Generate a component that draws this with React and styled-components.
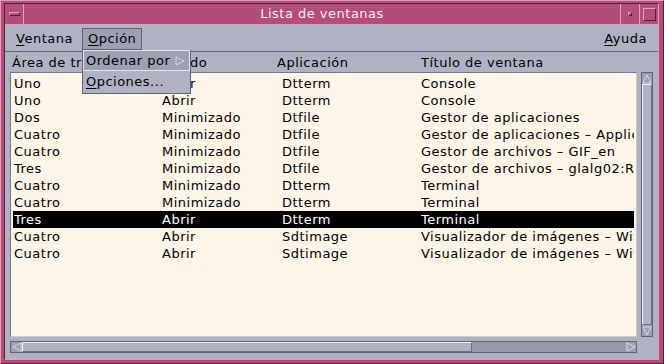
import React from "react";
import styled, { createGlobalStyle } from "styled-components";

const c = {
  pink: "#b34d7a",
  pinkLight: "#e0a0bd",
  pinkDark: "#5a1c38",
  gray: "#aeb2c4",
  grayDark: "#5f6374",
  grayMid: "#9ca1b4",
  trough: "#9297aa",
  bevel: "#e4e6ee",
  cream: "#fdf5e7",
};

const GlobalStyle = createGlobalStyle`
  html, body { margin: 0; padding: 0; background: ${c.pink}; }
  body { font-family: "DejaVu Sans", "Liberation Sans", sans-serif; }
  * { box-sizing: border-box; }
`;

const Frame = styled.div`
  width: 664px;
  height: 364px;
  background: ${c.pink};
  border: 1px solid;
  border-color: ${c.pinkLight} ${c.pinkDark} ${c.pinkDark} ${c.pinkLight};
  padding: 2px 4px 3px 3px;
  display: flex;
`;

const Window = styled.div`
  flex: 1;
  display: flex;
  flex-direction: column;
  border: 1px solid;
  border-color: ${c.pinkDark} ${c.pinkLight} ${c.pinkLight} ${c.pinkDark};
`;

const TitleBar = styled.div`
  height: 21px;
  display: flex;
  border-bottom: 1px solid ${c.pinkLight};
  background: ${c.pink};
`;

const TitleButton = styled.div`
  width: 19px;
  display: flex;
  align-items: center;
  justify-content: center;
  border-left: ${(p) => (p.$side === "right" ? `1px solid ${c.pinkLight}` : "none")};
  border-right: ${(p) => (p.$side === "left" ? `1px solid ${c.pinkLight}` : "none")};
`;

const Glyph = styled.span`
  display: block;
  width: ${(p) => p.$w}px;
  height: ${(p) => p.$h}px;
  border: 1px solid;
  border-color: ${c.pinkLight} ${c.pinkDark} ${c.pinkDark} ${c.pinkLight};
`;

const Title = styled.div`
  flex: 1;
  text-align: center;
  color: #fbeef4;
  font-size: 13px;
  line-height: 20px;
  letter-spacing: 0.5px;
`;

const Panel = styled.div`
  flex: 1;
  display: flex;
  flex-direction: column;
  background: ${c.gray};
`;

const MenuBar = styled.div`
  height: 27px;
  display: flex;
  align-items: flex-start;
  padding: 3px 5px 0 5px;
  border-bottom: 1px solid ${c.grayDark};
`;

const MenuWrap = styled.div`
  position: relative;
  margin-left: ${(p) => (p.$push ? "auto" : "0")};
  margin-right: ${(p) => (p.$gap ? "3px" : "0")};
`;

const MenuItem = styled.div`
  height: 22px;
  padding: 0 5px;
  font-size: 13px;
  line-height: 20px;
  letter-spacing: 0.5px;
  color: #000;
  border: 1px solid ${(p) => (p.$open ? c.grayDark : "transparent")};
  background: ${(p) => (p.$open ? c.grayMid : "transparent")};
`;

const Mn = styled.span`
  text-decoration: underline;
  text-underline-offset: 2px;
`;

const Dropdown = styled.div`
  position: absolute;
  top: 100%;
  left: 0;
  width: 109px;
  height: 44px;
  background: ${c.gray};
  border: 1px solid ${c.grayDark};
  border-top: none;
  z-index: 5;
`;

const DropItem = styled.div`
  height: 21px;
  display: flex;
  align-items: center;
  justify-content: space-between;
  padding: 0 4px 0 2px;
  font-size: 13px;
  letter-spacing: 0.5px;
  border: 1px solid ${(p) => (p.$active ? c.bevel : "transparent")};
  background: ${(p) => (p.$active ? c.grayMid : "transparent")};
`;

const Body = styled.div`
  flex: 1;
  display: flex;
  flex-direction: column;
  padding: 0 5px 6px 5px;
`;

const HeaderRow = styled.div`
  height: 20px;
  display: grid;
  grid-template-columns: 148px 117px 144px 1fr;
  padding: 1px 0 0 2px;
  font-size: 13px;
  line-height: 19px;
  letter-spacing: 0.5px;
  white-space: nowrap;
`;

const ContentRow = styled.div`
  height: 265px;
  display: flex;
  gap: 4px;
`;

const List = styled.div`
  width: 627px;
  background: ${c.cream};
  border: 1px solid;
  border-color: #73788a #cfccc6 #cfccc6 #73788a;
  padding: 2px;
  overflow: hidden;
`;

const Row = styled.div`
  height: 17px;
  display: grid;
  grid-template-columns: 148px 120px 139px 1fr;
  padding-left: 1px;
  font-size: 13px;
  line-height: 17px;
  letter-spacing: 0.5px;
  white-space: nowrap;
  overflow: hidden;
  background: ${(p) => (p.$selected ? "#000" : "transparent")};
  color: ${(p) => (p.$selected ? "#fff" : "#000")};
`;

const Cell = styled.span`
  overflow: hidden;
`;

const VScroll = styled.div`
  width: 12px;
  display: flex;
  flex-direction: column;
  border: 1px solid ${c.grayDark};
  background: ${c.gray};
`;

const HScroll = styled.div`
  width: 627px;
  height: 12px;
  margin-top: 4px;
  display: flex;
  border: 1px solid ${c.grayDark};
  background: ${c.trough};
`;

const ArrowBox = styled.div`
  flex: none;
  width: ${(p) => (p.$horiz ? "11px" : "auto")};
  height: ${(p) => (p.$horiz ? "auto" : "11px")};
  display: flex;
  align-items: center;
  justify-content: center;
  background: ${c.grayMid};
`;

const Thumb = styled.div`
  flex: ${(p) => (p.$len ? "none" : "1")};
  width: ${(p) => (p.$len ? `${p.$len}px` : "auto")};
  background: ${c.gray};
  border: 1px solid;
  border-color: #f2f3f7 #6d7183 #6d7183 #f2f3f7;
`;

const Trough = styled.div`
  flex: 1;
`;

const Arrow = ({ dir }) => {
  const pts = {
    up: "5,1 1,9 9,9",
    down: "1,1 9,1 5,9",
    left: "1,5 9,1 9,9",
    right: "1,1 9,5 1,9",
  }[dir];
  return (
    <svg width="10" height="10" viewBox="0 0 10 10">
      <polygon
        points={pts}
        fill="none"
        stroke="#f4f4f8"
        strokeWidth="1"
        strokeDasharray="1.5 0.8"
      />
    </svg>
  );
};

const rows = [
  ["Uno", "Abrir", "Dtterm", "Console"],
  ["Uno", "Abrir", "Dtterm", "Console"],
  ["Dos", "Minimizado", "Dtfile", "Gestor de aplicaciones"],
  ["Cuatro", "Minimizado", "Dtfile", "Gestor de aplicaciones – Applications"],
  ["Cuatro", "Minimizado", "Dtfile", "Gestor de archivos – GIF_en"],
  ["Tres", "Minimizado", "Dtfile", "Gestor de archivos – glalg02:Root"],
  ["Cuatro", "Minimizado", "Dtterm", "Terminal"],
  ["Cuatro", "Minimizado", "Dtterm", "Terminal"],
  ["Tres", "Abrir", "Dtterm", "Terminal"],
  ["Cuatro", "Abrir", "Sdtimage", "Visualizador de imágenes – Without Title"],
  ["Cuatro", "Abrir", "Sdtimage", "Visualizador de imágenes – Without Title"],
];

const headers = ["Área de trabajo", "Estado", "Aplicación", "Título de ventana"];

export default function App() {
  return (
    <>
      <GlobalStyle />
      <Frame>
        <Window>
          <TitleBar>
            <TitleButton $side="left">
              <Glyph $w={11} $h={4} />
            </TitleButton>
            <Title>Lista de ventanas</Title>
            <TitleButton $side="right">
              <Glyph $w={4} $h={4} />
            </TitleButton>
            <TitleButton $side="right">
              <Glyph $w={13} $h={13} />
            </TitleButton>
          </TitleBar>
          <Panel>
            <MenuBar>
              <MenuWrap $gap>
                <MenuItem>
                  <Mn>V</Mn>entana
                </MenuItem>
              </MenuWrap>
              <MenuWrap>
                <MenuItem $open>
                  <Mn>O</Mn>pción
                </MenuItem>
                <Dropdown>
                  <DropItem $active>
                    <span>Ordenar por</span>
                    <Arrow dir="right" />
                  </DropItem>
                  <DropItem>
                    <span>
                      <Mn>O</Mn>pciones...
                    </span>
                  </DropItem>
                </Dropdown>
              </MenuWrap>
              <MenuWrap $push>
                <MenuItem>
                  <Mn>A</Mn>yuda
                </MenuItem>
              </MenuWrap>
            </MenuBar>
            <Body>
              <HeaderRow>
                {headers.map((h) => (
                  <Cell key={h}>{h}</Cell>
                ))}
              </HeaderRow>
              <ContentRow>
                <List>
                  {rows.map((r, i) => (
                    <Row key={i} $selected={i === 8}>
                      {r.map((t, j) => (
                        <Cell key={j}>{t}</Cell>
                      ))}
                    </Row>
                  ))}
                </List>
                <VScroll>
                  <ArrowBox>
                    <Arrow dir="up" />
                  </ArrowBox>
                  <Thumb />
                  <ArrowBox>
                    <Arrow dir="down" />
                  </ArrowBox>
                </VScroll>
              </ContentRow>
              <HScroll>
                <ArrowBox $horiz>
                  <Arrow dir="left" />
                </ArrowBox>
                <Thumb $len={450} />
                <Trough />
                <ArrowBox $horiz>
                  <Arrow dir="right" />
                </ArrowBox>
              </HScroll>
            </Body>
          </Panel>
        </Window>
      </Frame>
    </>
  );
}
